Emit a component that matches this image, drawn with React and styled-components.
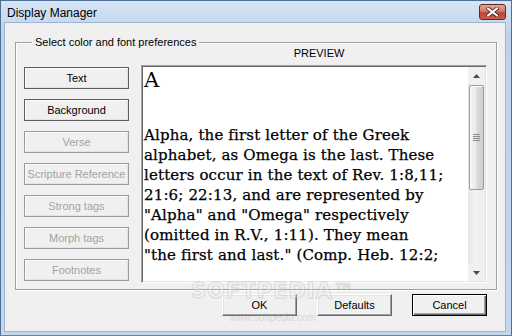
import React from "react";
import styled, { createGlobalStyle } from "styled-components";

const Global = createGlobalStyle`
  html, body { margin: 0; padding: 0; background: #fff; }
  body { width: 512px; height: 336px; overflow: hidden; }
  #root { width: 512px; height: 336px; }
`;

const Window = styled.div`
  position: relative;
  width: 512px;
  height: 336px;
  box-sizing: border-box;
  display: flex;
  flex-direction: column;
  background: linear-gradient(180deg, #d6e5f5 0%, #bdd3ec 10%, #c3d7ee 100%);
  border: 1px solid #4f6f98;
  border-bottom-color: #2f8fd8;
  font-family: "Liberation Sans", Arial, sans-serif;
`;

const TitleBar = styled.div`
  height: 21px;
  display: flex;
  align-items: flex-start;
  justify-content: space-between;
  padding: 0 5px 0 6px;
  box-sizing: border-box;
`;

const Title = styled.div`
  font-size: 12px;
  line-height: 20px;
  padding-top: 2px;
  color: #000;
`;

const CloseButton = styled.div`
  margin-top: 3px;
  width: 27px;
  height: 16px;
  box-sizing: border-box;
  border: 1px solid #5a2a28;
  border-radius: 3px;
  background: linear-gradient(180deg, #e8a594 0%, #d4796a 45%, #c0463a 55%, #c85a48 100%);
  display: flex;
  align-items: center;
  justify-content: center;
`;

const Client = styled.div`
  flex: 1;
  margin: 0 5px 3px 3px;
  background: #f0f0f0;
  border: 1px solid #9fb4cf;
  box-sizing: border-box;
  display: flex;
  flex-direction: column;
  padding: 19px 8px 0 10px;
  position: relative;
`;

const GroupBox = styled.div`
  position: relative;
  height: 248px;
  box-sizing: border-box;
  border: 1px solid #a0a0a0;
  box-shadow: 1px 1px 0 #fff, inset 1px 1px 0 #fff;
  display: flex;
  padding: 0 9px 0 8px;
`;

const Caption = styled.div`
  position: absolute;
  top: -8px;
  left: 16px;
  padding: 0 3px;
  background: #f0f0f0;
  font-size: 11px;
  line-height: 14px;
  color: #000;
`;

const ButtonColumn = styled.div`
  width: 105px;
  padding-top: 24px;
  display: flex;
  flex-direction: column;
  gap: 10px;
`;

const SideButton = styled.div`
  height: 22px;
  box-sizing: border-box;
  border: 1px solid ${(p) => (p.$disabled ? "#9a9a9a" : "#5e5e5e")};
  box-shadow: inset 1px 1px 0 #fbfbfb, inset -1px -1px 0 #e3e3e3;
  background: #f0f0f0;
  display: flex;
  align-items: center;
  justify-content: center;
  font-size: 11px;
  color: ${(p) => (p.$disabled ? "#a3a3a3" : "#000")};
  white-space: nowrap;
`;

const PreviewColumn = styled.div`
  flex: 1;
  margin-left: 12px;
  display: flex;
  flex-direction: column;
`;

const PreviewLabel = styled.div`
  height: 22px;
  font-size: 11px;
  line-height: 20px;
  text-align: center;
  padding-left: 10px;
  color: #000;
`;

const PreviewBox = styled.div`
  height: 218px;
  box-sizing: border-box;
  border: 1px solid;
  border-color: #a0a0a0 #fff #fff #a0a0a0;
  box-shadow: inset 1px 1px 0 #696969, inset -1px -1px 0 #e3e3e3;
  background: #fff;
  display: flex;
  padding: 1px;
`;

const PreviewText = styled.div`
  flex: 1;
  overflow: hidden;
  padding-left: 1px;
  font-family: "DejaVu Serif", "Liberation Serif", serif;
  color: #000;
`;

const Heading = styled.div`
  font-size: 21px;
  line-height: 27px;
  margin-bottom: 31px;
`;

const Line = styled.div`
  font-size: 15px;
  line-height: 20px;
  letter-spacing: 0.15px;
  white-space: nowrap;
  -webkit-text-stroke: 0.25px #000;
`;

const ScrollBar = styled.div`
  width: 17px;
  display: flex;
  flex-direction: column;
  background: linear-gradient(90deg, #e6e6e6, #f2f2f2 40%, #eeeeee);
`;

const ArrowButton = styled.div`
  height: 17px;
  display: flex;
  align-items: center;
  justify-content: center;
  background: #f0f0f0;
`;

const Track = styled.div`
  flex: 1;
  display: flex;
  flex-direction: column;
  padding: ${(p) => p.$offset}px 1px 0 1px;
`;

const Thumb = styled.div`
  height: ${(p) => p.$size}px;
  box-sizing: border-box;
  border: 1px solid #9c9c9c;
  border-radius: 2px;
  background: linear-gradient(90deg, #f4f4f4 0%, #eaeaea 45%, #d9d9d9 55%, #cfcfcf 100%);
  box-shadow: inset 1px 1px 0 #fdfdfd;
  display: flex;
  align-items: center;
  justify-content: center;
`;

const Footer = styled.div`
  display: flex;
  justify-content: flex-end;
  gap: 20px;
  margin-top: 4px;
  padding-right: 10px;
`;

const DialogButton = styled.div`
  width: 75px;
  height: 22px;
  box-sizing: border-box;
  border: 1px solid;
  border-color: ${(p) => (p.$default ? "#000" : "#fff #696969 #696969 #fff")};
  box-shadow: ${(p) =>
    p.$default
      ? "inset 1px 1px 0 #fff, inset -1px -1px 0 #696969, inset -2px -2px 0 #a0a0a0"
      : "inset -1px -1px 0 #a0a0a0, inset 1px 1px 0 #e3e3e3"};
  background: #f0f0f0;
  display: flex;
  align-items: center;
  justify-content: center;
  font-size: 11px;
  color: #000;
`;

const Watermark = styled.div`
  position: absolute;
  left: 186px;
  top: 257px;
  display: flex;
  flex-direction: column;
  align-items: center;
  pointer-events: none;
`;

const WatermarkBig = styled.div`
  font-family: "DejaVu Sans", sans-serif;
  font-weight: bold;
  font-size: 21px;
  letter-spacing: 1px;
  line-height: 22px;
  -webkit-text-stroke: 1px rgba(170, 170, 170, 0.35);
  color: rgba(240, 240, 240, 0.3);
`;

const WatermarkSmall = styled.div`
  font-size: 10px;
  line-height: 12px;
  margin-top: 10px;
  color: rgba(170, 170, 170, 0.4);
`;

const Arrow = ({ down }) => (
  <svg width="7" height="4" viewBox="0 0 7 4">
    <polygon points={down ? "0,0 7,0 3.5,4" : "0,4 7,4 3.5,0"} fill="#4a4a4a" />
  </svg>
);

const Grip = () => (
  <svg width="7" height="7" viewBox="0 0 7 7">
    {[0, 2, 4, 6].map((y) => (
      <line key={y} x1="0" y1={y + 0.5} x2="7" y2={y + 0.5} stroke="#8a8a8a" strokeWidth="1" />
    ))}
  </svg>
);

const CloseX = () => (
  <svg width="13" height="10" viewBox="0 0 13 10">
    <path d="M2 1.5 L11 8.5 M11 1.5 L2 8.5" stroke="#4a2020" strokeWidth="3.6" strokeLinecap="square" />
    <path d="M2 1.5 L11 8.5 M11 1.5 L2 8.5" stroke="#fff" strokeWidth="2" strokeLinecap="square" />
  </svg>
);

const sideButtons = [
  { label: "Text" },
  { label: "Background" },
  { label: "Verse", disabled: true },
  { label: "Scripture Reference", disabled: true },
  { label: "Strong tags", disabled: true },
  { label: "Morph tags", disabled: true },
  { label: "Footnotes", disabled: true },
];

const lines = [
  "Alpha, the first letter of the Greek",
  "alphabet, as Omega is the last. These",
  "letters occur in the text of Rev. 1:8,11;",
  "21:6; 22:13, and are represented by",
  "\"Alpha\" and \"Omega\" respectively",
  "(omitted in R.V., 1:11). They mean",
  "\"the first and last.\" (Comp. Heb. 12:2;",
];

export default function App() {
  return (
    <>
      <Global />
      <Window>
        <TitleBar>
          <Title>Display Manager</Title>
          <CloseButton>
            <CloseX />
          </CloseButton>
        </TitleBar>
        <Client>
          <GroupBox>
            <Caption>Select color and font preferences</Caption>
            <ButtonColumn>
              {sideButtons.map((b) => (
                <SideButton key={b.label} $disabled={b.disabled}>
                  {b.label}
                </SideButton>
              ))}
            </ButtonColumn>
            <PreviewColumn>
              <PreviewLabel>PREVIEW</PreviewLabel>
              <PreviewBox>
                <PreviewText>
                  <Heading>A</Heading>
                  {lines.map((l, i) => (
                    <Line key={i}>{l}</Line>
                  ))}
                </PreviewText>
                <ScrollBar>
                  <ArrowButton>
                    <Arrow />
                  </ArrowButton>
                  <Track $offset={1}>
                    <Thumb $size={105}>
                      <Grip />
                    </Thumb>
                  </Track>
                  <ArrowButton>
                    <Arrow down />
                  </ArrowButton>
                </ScrollBar>
              </PreviewBox>
            </PreviewColumn>
          </GroupBox>
          <Footer>
            <DialogButton>OK</DialogButton>
            <DialogButton>Defaults</DialogButton>
            <DialogButton $default>Cancel</DialogButton>
          </Footer>
          <Watermark>
            <WatermarkBig>SOFTPEDIA™</WatermarkBig>
            <WatermarkSmall>www.softpedia.com</WatermarkSmall>
          </Watermark>
        </Client>
      </Window>
    </>
  );
}
